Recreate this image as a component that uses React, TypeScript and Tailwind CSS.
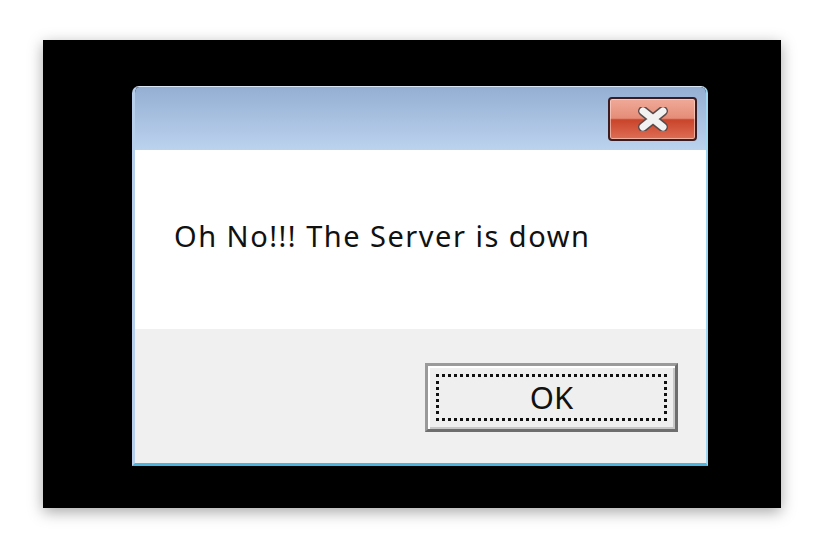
export default function App() {
  return (
    <div className="w-[835px] h-[547px] bg-white pt-[40px] pl-[43px] overflow-hidden">
      <div className="w-[738px] h-[468px] bg-black pt-[46px] pl-[89px] shadow-[0_4px_14px_rgba(0,0,0,0.35)]">
        {/* Dialog */}
        <div className="w-[576px] h-[380px] flex flex-col rounded-t-[7px] overflow-hidden border-l-[3px] border-r-[2px] border-t border-b-[3px] border-l-[#b7cfea] border-r-[#9fd6f0] border-t-[#d8e6f5] border-b-[#4db4de]">
          {/* Title bar */}
          <div className="h-[63px] flex justify-end items-start pt-[10px] pr-[9px] bg-gradient-to-b from-[#94afd3] to-[#bcd3ee]">
            <button className="w-[89px] h-[44px] rounded-[4px] border-2 border-[#3a1d22] flex items-center justify-center bg-[linear-gradient(to_bottom,#f0aa98_0%,#e48d78_48%,#c9442a_52%,#dd6e55_100%)] shadow-[inset_0_0_0_1px_rgba(255,220,210,0.6)]">
              <svg width="36" height="24" viewBox="0 0 36 24">
                <path
                  d="M8 4 L28 20 M28 4 L8 20"
                  stroke="#5a4a4a"
                  strokeWidth="10"
                  strokeLinecap="round"
                />
                <path
                  d="M8 4 L28 20 M28 4 L8 20"
                  stroke="#f2f2f2"
                  strokeWidth="7"
                  strokeLinecap="round"
                />
              </svg>
            </button>
          </div>

          {/* Message */}
          <div className="h-[179px] bg-white pl-[39px] pt-[71px]">
            <p className="text-[29px] leading-none tracking-[1.5px] text-[#111] font-['Noto_Sans',sans-serif]">
              Oh No!!! The Server is down
            </p>
          </div>

          {/* Footer */}
          <div className="flex-1 bg-[#f0f0f0] pl-[290px] pt-[34px]">
            <button className="w-[253px] h-[69px] bg-[#efefef] border-[3px] border-t-[#9a9a9a] border-l-[#9a9a9a] border-r-[#6e6e6e] border-b-[#6e6e6e] shadow-[inset_2px_2px_0_#ffffff,inset_-2px_-2px_0_#c8c8c8] p-[8px]">
              <div className="w-full h-full border-[3px] border-dotted border-[#111] flex items-center justify-center">
                <span className="text-[31px] leading-none text-[#111] font-['Noto_Sans',sans-serif]">OK</span>
              </div>
            </button>
          </div>
        </div>
      </div>
    </div>
  );
}
